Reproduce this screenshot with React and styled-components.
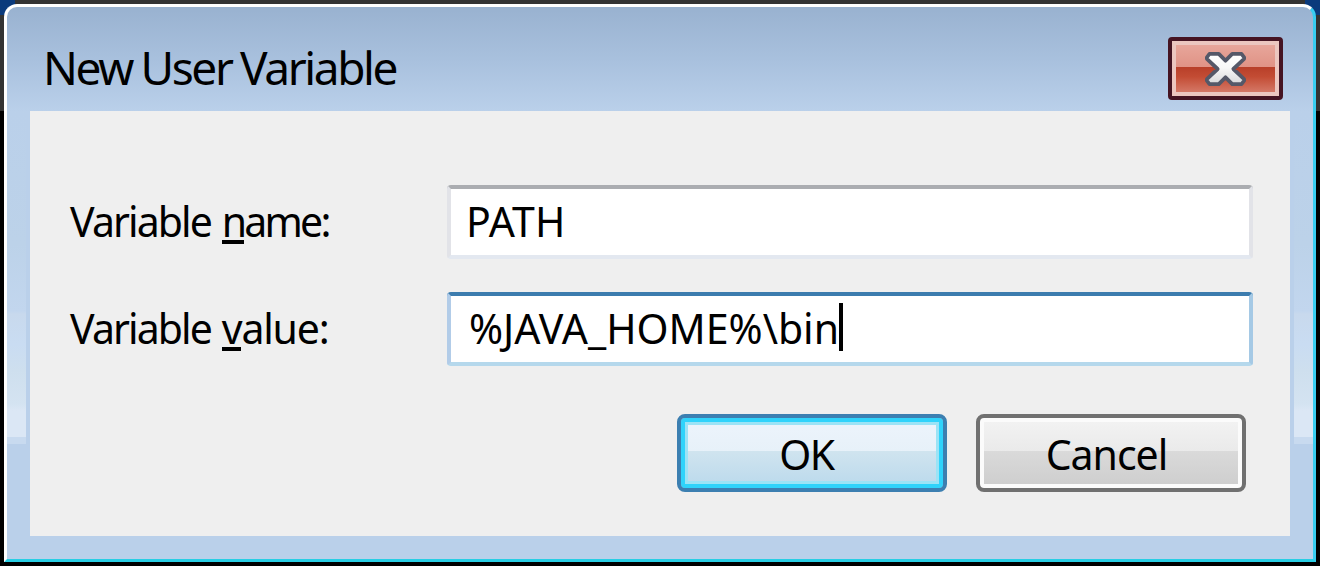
import React from "react";
import styled, { createGlobalStyle } from "styled-components";

const GlobalStyle = createGlobalStyle`
  * { box-sizing: border-box; }
  html, body { margin: 0; padding: 0; background: #000; overflow: hidden; }
`;

const glassShine = "linear-gradient(#bad0ea, #bcd2e9 40%, #c2d6ee 60%, #c8d9ed 61%, #c9dcf2 70%, #cedfee 78%, #d4e3f1 88%, #dbe7f5 90%, #dbe7f5 98%, #c8daef 98%)";

const Desktop = styled.div`
  width: 1320px;
  height: 566px;
  padding: 4px;
  font-family: "Noto Sans", "Open Sans", sans-serif;
  color: #000;
  background:
    linear-gradient(#0a3a7c, #0a3a7c) 0 0 / 15px 15px no-repeat,
    linear-gradient(#0a3a7c, #0a3a7c) 100% 0 / 15px 15px no-repeat,
    linear-gradient(#333, #333) 0 0 / 100% 111px no-repeat,
    #000;
`;

const Frame = styled.div`
  width: 1312px;
  height: 558px;
  border: 3px solid;
  border-color: #fff #38cdf0 #28cee4 #fff;
  border-radius: 13px 13px 0 0;
  padding: 0 23px 23px;
  background:
    ${glassShine} 0 104px / 19px 333px no-repeat,
    ${glassShine} 100% 104px / 19px 333px no-repeat,
    linear-gradient(#99b2d0, #a9c1de 55px, #bad0ea 104px, #bad0ea);
`;

const TitleBar = styled.header`
  height: 104px;
  padding: 30px 7px 0 13px;
  display: flex;
  justify-content: space-between;
  align-items: flex-start;
`;

const Title = styled.h1`
  margin: 0;
  font-size: 46px;
  font-weight: 400;
  line-height: 61px;
  letter-spacing: -2.4px;
  word-spacing: -1px;
  white-space: nowrap;
`;

const CloseButton = styled.button`
  width: 115px;
  height: 63px;
  padding: 0;
  border: 4px solid #451422;
  border-radius: 4px;
  box-shadow: inset 0 0 0 4px #ecc6bf;
  background: linear-gradient(#e9a99e, #e09386 47%, #b83f29 47%, #c34c34 65%, #d98373);
  display: grid;
  place-items: center;
`;

const Client = styled.main`
  height: 425px;
  padding: 74px 37px 0 40px;
  background: #efefef;
`;

const Row = styled.div`
  display: flex;
  height: 74px;
  margin-bottom: ${(p) => p.$gap}px;
`;

const Label = styled.label`
  width: 377px;
  font-size: 41px;
  line-height: 72px;
  letter-spacing: -1.9px;
  word-spacing: 2px;
  white-space: pre;
`;

const Word = styled.span`
  letter-spacing: ${(p) => p.$spacing}px;
`;

const Key = styled.span`
  box-shadow: inset 0 -4px #000;
  display: inline-block;
  line-height: 56px;
  height: 51px;
`;

const Field = styled.div`
  flex: 1;
  height: 74px;
  border: 4px solid;
  border-color: ${(p) => (p.$focused ? "#3c7cae #a5c9e5 #b5d8ec #b2cce8" : "#abadb1 #e2e3e8 #e3e8f0 #e2e3e8")};
  border-radius: 4px;
  background: #fff;
  padding-left: ${(p) => p.$inset}px;
  display: flex;
  align-items: flex-start;
  font-size: 41px;
  line-height: 64px;
`;

const Caret = styled.span`
  width: 4px;
  height: 48px;
  margin-top: 7px;
  background: #000;
`;

const Actions = styled.div`
  display: flex;
  justify-content: flex-end;
  gap: 29px;
  padding-right: 7px;
`;

const Button = styled.button`
  width: 270px;
  height: 78px;
  padding: 2px ${(p) => p.$nudge}px 0 0;
  border: 4px solid ${(p) => (p.$primary ? "#3c7fb1" : "#707070")};
  border-radius: 8px;
  background: ${(p) =>
    p.$primary
      ? "linear-gradient(#edf4fc, #e7f1f9 47%, #d0e4ef 47%, #bad9ec)"
      : "linear-gradient(#f3f3f3, #eaeaea 47%, #dadada 47%, #cdcdcd)"};
  box-shadow: ${(p) => (p.$primary ? "inset 0 0 0 4px #2fd3fb, inset 0 0 0 7px #9be3f6" : "inset 0 0 0 4px #fbfbfb")};
  color: #000;
  font-family: inherit;
  font-size: 41px;
  line-height: 60px;
  letter-spacing: ${(p) => p.$spacing}px;
`;

const CrossIcon = () => (
  <svg width="41" height="34" viewBox="0 0 11 9" preserveAspectRatio="none">
    <defs>
      <linearGradient id="cross-body" x1="0" y1="0" x2="0" y2="1">
        <stop offset="0" stopColor="#fff" />
        <stop offset="0.45" stopColor="#f8f8f8" />
        <stop offset="1" stopColor="#d8d8da" />
      </linearGradient>
    </defs>
    <path
      d="M.5 1.4 1.2.5H3.7L5.5 2.3 7.3.5H9.8L10.5 1.4V1.8L7.6 4.5 10.5 7.2V7.6L9.8 8.5H7.3L5.5 6.7 3.7 8.5H1.2L.5 7.6V7.2L3.4 4.5.5 1.8Z"
      fill="url(#cross-body)"
      stroke="#555868"
      strokeWidth="1"
      strokeLinejoin="round"
    />
  </svg>
);

export default function App() {
  return (
    <>
      <GlobalStyle />
      <Desktop>
        <Frame>
          <TitleBar>
            <Title>New User Variable</Title>
            <CloseButton aria-label="Close"><CrossIcon /></CloseButton>
          </TitleBar>
          <Client>
            <Row $gap={33}>
              <Label>Variable <Word $spacing={-2.8}><Key>n</Key>ame:</Word></Label>
              <Field $inset={15}>PATH</Field>
            </Row>
            <Row $gap={48}>
              <Label>Variable <Word $spacing={-1.2}><Key>v</Key>alue:</Word></Label>
              <Field $focused $inset={18}>%JAVA_HOME%\bin<Caret /></Field>
            </Row>
            <Actions>
              <Button $primary $spacing={-1.5} $nudge={11}>OK</Button>
              <Button $spacing={-1} $nudge={9}>Cancel</Button>
            </Actions>
          </Client>
        </Frame>
      </Desktop>
    </>
  );
}
